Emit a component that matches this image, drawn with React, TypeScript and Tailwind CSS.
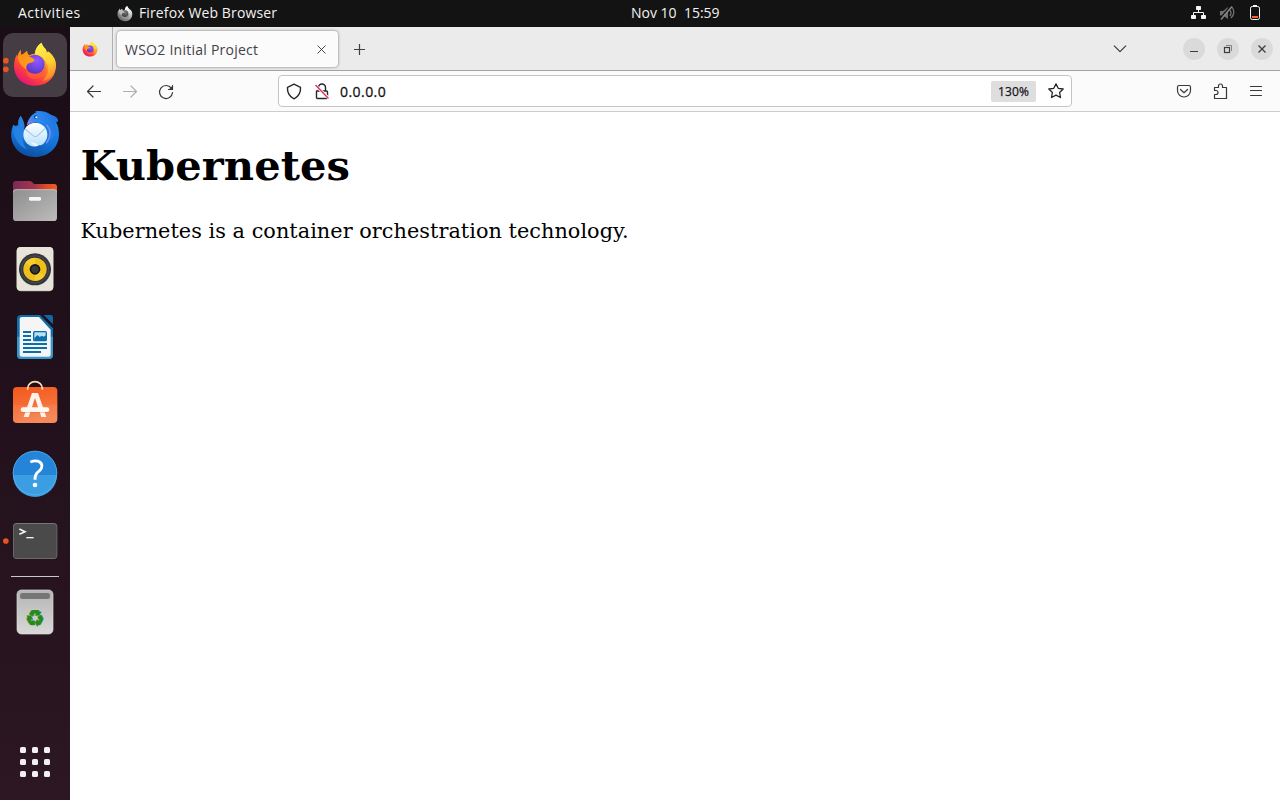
import type { ReactNode } from "react";

function FirefoxArt({ id, mono = false }: { id: string; mono?: boolean }) {
  const body = `${id}-body`;
  const flame = `${id}-flame`;
  const globe = `${id}-globe`;
  const face = `${id}-face`;
  return (
    <g>
      <defs>
        <linearGradient id={body} x1="0.85" y1="0.1" x2="0.25" y2="1">
          <stop offset="0" stopColor={mono ? "#e8e8e8" : "#ffe23a"} />
          <stop offset="0.35" stopColor={mono ? "#b8b8b8" : "#ff9a2a"} />
          <stop offset="0.7" stopColor={mono ? "#8a8a8a" : "#ff4239"} />
          <stop offset="1" stopColor={mono ? "#666" : "#e3107b"} />
        </linearGradient>
        <linearGradient id={flame} x1="0.4" y1="0" x2="0.7" y2="1">
          <stop offset="0" stopColor={mono ? "#fff" : "#fff04a"} />
          <stop offset="0.55" stopColor={mono ? "#ddd" : "#ffd030"} />
          <stop offset="1" stopColor={mono ? "#999" : "#ff7a2e"} />
        </linearGradient>
        <radialGradient id={globe} cx="0.6" cy="0.3" r="0.75">
          <stop offset="0" stopColor={mono ? "#777" : "#9059ff"} />
          <stop offset="0.55" stopColor={mono ? "#555" : "#7046e4"} />
          <stop offset="1" stopColor={mono ? "#444" : "#5b30b8"} />
        </radialGradient>
        <linearGradient id={face} x1="0" y1="0" x2="1" y2="1">
          <stop offset="0" stopColor={mono ? "#c8c8c8" : "#ff8a16"} />
          <stop offset="1" stopColor={mono ? "#aaa" : "#ffa21f"} />
        </linearGradient>
      </defs>
      <path d="M63 65C61 73 63 78 65 81C69 77 76 74 81 68C81 75 84 79 88 82C96 76 104 78 104 78C107 61 113 52 125 44C127 53 131 57 136 62C139 66 140 70 140 75L144 70C155 77 168 93 168 111C168 149 141 173 105 173C69 173 42 148 42 113C42 99 47 86 51 79L52 87C53 78 58 70 63 65Z" fill={`url(#${body})`} />
      <path d="M104 79C107 61 113 52 125 44C127 53 131 57 136 62C139 66 140 70 140 75L144 71C158 80 168 96 167 113C166 139 150 154 127 159C143 146 147 130 143 115C139 98 125 83 104 79Z" fill={`url(#${flame})`} />
      <circle cx="105" cy="109" r="29" fill={`url(#${globe})`} />
      <path d="M63 65C61 73 63 78 65 81C70 77 76 74 81 68C81 75 84 81 89 87C96 88 100 91 104 96C103 102 94 104 86 106C79 110 78 119 79 125C70 118 58 107 56 98C51 88 55 74 63 65Z" fill={`url(#${face})`} />
      <path d="M78 121C83 133 94 138 105 138C121 138 133 127 134 111C143 128 130 151 108 153C89 154 75 140 78 121Z" fill={mono ? "#999" : "#ff5b39"} opacity="0.8" />
    </g>
  );
}

function DockItem({ viewBox, children }: { viewBox: string; children: ReactNode }) {
  return (
    <svg className="block h-[68px] w-[70px] shrink-0" viewBox={viewBox}>
      {children}
    </svg>
  );
}

function Dock() {
  return (
    <nav className="flex w-[70px] shrink-0 flex-col items-center bg-linear-to-b from-[#1a0d16] via-[#22111c] to-[#2c1722] pt-1 pb-[4px]">
      <DockItem viewBox="0 9 210 204">
        <rect x="9" y="15" width="192" height="192" rx="30" fill="#463c44" />
        <circle cx="17.500" cy="98" r="8.500" fill="#e95420" />
        <circle cx="17.500" cy="124" r="8.500" fill="#e95420" />
        <FirefoxArt id="dock-fox" />
      </DockItem>

      <DockItem viewBox="0 213 210 204">
        <defs>
          <linearGradient id="tb-body" x1="0.7" y1="0" x2="0.4" y2="1">
            <stop offset="0" stopColor="#1b8cf0" />
            <stop offset="0.6" stopColor="#1373d9" />
            <stop offset="1" stopColor="#0c4fa0" />
          </linearGradient>
          <linearGradient id="tb-head" x1="0" y1="0.6" x2="1" y2="0.3">
            <stop offset="0" stopColor="#9a80f0" />
            <stop offset="0.3" stopColor="#2f8df4" />
            <stop offset="1" stopColor="#1d72dc" />
          </linearGradient>
          <linearGradient id="tb-mail" x1="0" y1="0" x2="0" y2="1">
            <stop offset="0" stopColor="#ffffff" />
            <stop offset="1" stopColor="#b9e0fb" />
          </linearGradient>
        </defs>
        <path d="M62 263C56 272 54 281 56 290C50 292 45 296 40 290C32 307 31 330 40 349C51 373 74 387 105 387C146 387 177 359 177 318C177 303 173 292 168 282L174 279C168 269 158 262 148 258L108 285L72 310C66 300 74 288 62 263Z" fill="url(#tb-body)" />
        <path d="M40 290C37 320 50 352 82 365C60 343 72 318 74 294C72 280 67 270 62 263C54 273 53 286 57 297C48 300 43 296 40 290Z" fill="#2582e3" />
        <path d="M80 292C86 270 95 258 111 252L104 250C124 247 143 252 153 261C169 264 174 271 174 279C171 282 166 284 163 285C173 302 169 325 151 339C157 320 148 300 137 290C120 278 99 282 80 292Z" fill="url(#tb-head)" />
        <circle cx="106" cy="320" r="36" fill="url(#tb-mail)" />
        <path d="M75 303L99 323Q106 329 113 323L136 301" fill="none" stroke="#9ccdf1" strokeWidth="3.500" />
        <path d="M92 343Q111 343 122 360Q102 358 92 343Z" fill="#eaf7ff" />
        <path d="M78 353Q97 377 130 357L120 351Q98 362 78 353Z" fill="#1761bb" />
        <path d="M139 290C156 308 151 329 139 346" fill="none" stroke="#7c90e8" strokeWidth="4" />
        <circle cx="107" cy="267" r="5" fill="#0b3e86" />
        <circle cx="109" cy="268" r="3" fill="#fff" />
      </DockItem>

      <DockItem viewBox="0 -3 210 204">
        <defs>
          <linearGradient id="files-back" x1="0" y1="0" x2="1" y2="0">
            <stop offset="0" stopColor="#7c2a58" />
            <stop offset="0.5" stopColor="#a5364a" />
            <stop offset="0.75" stopColor="#e04a22" />
            <stop offset="1" stopColor="#f05d22" />
          </linearGradient>
          <linearGradient id="files-front" x1="0" y1="0" x2="1" y2="1">
            <stop offset="0" stopColor="#8e8e8e" />
            <stop offset="1" stopColor="#bcbcbc" />
          </linearGradient>
        </defs>
        <path d="M39 48Q39 39 48 39H88Q93 39 97 43L102 48H163Q171 48 171 57V100H39Z" fill="url(#files-back)" />
        <rect x="39" y="64" width="132" height="95" rx="10" fill="url(#files-front)" />
        <path d="M40 73Q40 65 48 65H162Q170 65 170 73" fill="none" stroke="#d0d0d0" strokeWidth="2" />
        <rect x="87" y="87" width="36" height="11" rx="4" fill="#f7f7f7" />
      </DockItem>

      <DockItem viewBox="0 201 210 204">
        <rect x="50" y="237" width="110" height="133" rx="13" fill="#aaa69c" />
        <rect x="50" y="237" width="110" height="131" rx="12" fill="#e8e4da" />
        <circle cx="105" cy="304" r="48" fill="#353638" />
        <circle cx="105" cy="304" r="41" fill="none" stroke="#4a4c5e" strokeWidth="3" />
        <circle cx="105" cy="304" r="35" fill="#efc01c" />
        <path d="M105 304L76 284A35 35 0 0 1 105 269ZM105 304L134 324A35 35 0 0 1 105 339Z" fill="#ffd93f" opacity="0.500" />
        <circle cx="105" cy="304" r="16" fill="#151617" />
        <circle cx="105" cy="304" r="11" fill="#37383a" />
      </DockItem>

      <DockItem viewBox="0 -3 210 204">
        <path d="M63 33H120L159 73V152Q159 165 147 165H63Q51 165 51 152V45Q51 33 63 33Z" fill="#0f6ea9" />
        <path d="M51 98H159V152Q159 165 147 165H63Q51 165 51 152Z" fill="#3597c7" />
        <path d="M66 39H117L152 77V152Q152 158 146 158H66Q59 158 59 152V46Q59 39 66 39Z" fill="#f5f5f5" />
        <path d="M131 33H152Q159 33 159 40V61Z" fill="#0c69a5" />
        <g stroke="#0a6eab" strokeWidth="5.500">
          <path d="M69 84H93M69 96H93M69 108H93M69 120H141M69 132H141M69 144H123" />
        </g>
        <rect x="101" y="83" width="38" height="27" rx="3" fill="#badff0" stroke="#0a6eab" strokeWidth="4" />
        <path d="M103 103L112 93L119 99L126 95L131 98L138 94V109H103Z" fill="#0a6eab" />
      </DockItem>

      <DockItem viewBox="0 201 210 204">
        <defs>
          <linearGradient id="store" x1="0" y1="0" x2="0.3" y2="1">
            <stop offset="0" stopColor="#f35819" />
            <stop offset="0.5" stopColor="#f56a32" />
            <stop offset="1" stopColor="#f6824f" />
          </linearGradient>
        </defs>
        <rect x="39" y="249" width="133" height="108" rx="12" fill="url(#store)" />
        <path d="M39 303H172V346Q170 357 160 357H50Q39 356 39 346Z" fill="#fff" opacity="0.060" />
        <path d="M83 257V253A22 20 0 0 1 127 253V257" fill="none" stroke="#f9deb5" strokeWidth="5" />
        <path d="M71 339L96 267H114L139 339H124L105 282L86 339Z" fill="#fcf3ea" />
        <rect x="62" y="310" width="86" height="14" rx="7" fill="#fff8f1" />
        <path d="M63 325.500H147" stroke="#dd5b2d" strokeWidth="2.500" opacity="0.350" />
      </DockItem>

      <DockItem viewBox="0 15 210 204">
        <circle cx="105" cy="117" r="66.500" fill="#2384d8" />
        <path d="M39 123H171A66 66 0 0 1 39 123Z" fill="#3b9ee3" />
        <circle cx="105" cy="117" r="65.500" fill="none" stroke="#60b3ee" strokeWidth="2" />
        <path d="M91 84Q108 77 119 84Q129 91 124 103Q121 109 112 116Q105 122 105 137" fill="none" stroke="#fff" strokeWidth="8.500" />
        <circle cx="105" cy="153" r="7" fill="#fff" />
      </DockItem>

      <DockItem viewBox="0 219 210 204">
        <circle cx="17.500" cy="321" r="8.500" fill="#e95420" />
        <rect x="39" y="267" width="133" height="108" rx="12" fill="#777" />
        <rect x="41" y="270" width="129" height="103" rx="10" fill="#4a4a4a" />
        <path d="M58 285L75 293L58 301" fill="none" stroke="#f3f3f3" strokeWidth="5" />
        <path d="M79 311H101" stroke="#f3f3f3" strokeWidth="4" />
      </DockItem>

      <div className="mt-px h-px w-12 shrink-0 bg-[#c9c5c8]" />
      <div className="h-px shrink-0" />

      <DockItem viewBox="0 24 210 204">
        <defs>
          <linearGradient id="trash" x1="0" y1="0" x2="0" y2="1">
            <stop offset="0" stopColor="#b5b5b5" />
            <stop offset="1" stopColor="#d8d8d8" />
          </linearGradient>
        </defs>
        <rect x="51" y="60" width="108" height="132" rx="13" fill="url(#trash)" stroke="#dedede" strokeWidth="2" />
        <rect x="60" y="69" width="90" height="18" rx="7" fill="#767676" />
        <text x="105" y="167" textAnchor="middle" fontFamily="DejaVu Sans, sans-serif" fontSize="66" fill="#26891e" stroke="#26891e" strokeWidth="2.500">♻</text>
      </DockItem>

      <div className="mt-auto mb-[19px] grid grid-cols-3 gap-1.5">
        {[0, 1, 2, 3, 4, 5, 6, 7, 8].map((n) => (
          <span key={n} className="size-1.5 rounded-[1.500px] bg-[#f2f0f1]" />
        ))}
      </div>
    </nav>
  );
}

function TopBar() {
  return (
    <header className="flex h-[27px] shrink-0 items-center bg-[#131313] font-['Open_Sans','Noto_Sans',sans-serif] text-[14px] leading-[25px] whitespace-pre text-[#f2f2f2]">
      <span className="w-[99px] pb-0.5 pl-[18px] tracking-[0.5px]">Activities</span>
      <svg className="ml-[18px] h-4 w-[22px]" viewBox="38 44 132 136" preserveAspectRatio="xMinYMid meet">
        <FirefoxArt id="bar-fox" mono />
      </svg>
      <span className="w-[492px] pb-0.5 tracking-[0.120px]">Firefox Web Browser</span>
      <span className="pb-0.5">Nov 10  15:59</span>
      <svg className="mr-[18px] ml-auto h-[27px] w-[72px]" viewBox="1190 0 72 27">
        <g fill="#f5f5f5">
          <rect x="1196" y="6" width="5" height="4" rx="0.800" />
          <rect x="1191" y="15" width="5" height="4" rx="0.800" />
          <rect x="1201" y="15" width="5" height="4" rx="0.800" />
        </g>
        <path d="M1198.500 9V12.500M1193.500 15.500V12.500H1203.500V15.500" fill="none" stroke="#f5f5f5" />
        <path d="M1220 11H1223L1228 7V19L1223 15.500H1220Z" fill="#6f6f6f" />
        <path d="M1230 10Q1232 13 1230 16M1232 7Q1236 13 1231 18" fill="none" stroke="#6f6f6f" strokeWidth="1.300" />
        <path d="M1220 18.500L1231 5.500" stroke="#131313" strokeWidth="1.200" />
        <path d="M1221 19.500L1232 6.500" stroke="#858585" strokeWidth="1.500" />
        <rect x="1250.500" y="6.500" width="9" height="13" rx="1.800" fill="none" stroke="#f5f5f5" />
        <rect x="1253" y="5" width="4" height="2" fill="#f5f5f5" />
        <rect x="1252" y="16" width="6" height="2" fill="#f26a2e" />
      </svg>
    </header>
  );
}

function WindowButton({ children }: { children: ReactNode }) {
  return (
    <button className="flex size-[22px] items-center justify-center rounded-full bg-[#dadada]">
      <svg className="size-[22px]" viewBox="0 0 22 22" fill="none" stroke="#3d3d3d">
        {children}
      </svg>
    </button>
  );
}

function TabStrip() {
  return (
    <div className="flex h-11 shrink-0 border-b border-[#a3a3a3] bg-[#ebebeb]">
      <div className="flex w-[43px] items-center border-r border-[#b0b0b0] pl-3">
        <svg className="size-4" viewBox="38 41 134 136">
          <FirefoxArt id="tab-fox" />
        </svg>
      </div>
      <div className="mt-[4px] ml-1 flex h-[36px] w-[221px] items-center rounded bg-[#fbfbfb] shadow-[0_0_3px_rgba(0,0,0,0.5)]">
        <span className="pl-[8px] font-['Open_Sans','Noto_Sans',sans-serif] text-[14px] tracking-[0.250px] text-[#42414a]">WSO2 Initial Project</span>
        <svg className="mr-[12px] ml-auto size-[9px]" viewBox="0 0 9 9" stroke="#48474f" strokeWidth="1">
          <path d="M0.500 0.500L8.500 8.500M8.500 0.500L0.500 8.500" />
        </svg>
      </div>
      <svg className="mt-[16px] ml-[16px] h-[13px] w-[11px]" viewBox="0 0 11 13" stroke="#3f3f44" strokeWidth="1.200">
        <path d="M5.500 1V12M0 6.500H11" />
      </svg>
      <svg className="mt-[18px] mr-[56px] ml-auto h-2 w-[14px]" viewBox="0 0 14 8" fill="none" stroke="#3f3f44" strokeWidth="1.200">
        <path d="M1 0.700L7 6.700L13 0.700" />
      </svg>
      <div className="mt-[11px] mr-[7px] flex h-[22px] gap-3">
        <WindowButton>
          <path d="M7 13.500H15" />
        </WindowButton>
        <WindowButton>
          <rect x="7.500" y="9.500" width="5" height="5" strokeWidth="1.200" />
          <path d="M9 7.500H14.500V13" stroke="#858585" />
        </WindowButton>
        <WindowButton>
          <path d="M7.500 7.500L14.500 14.500M14.500 7.500L7.500 14.500" strokeWidth="1.300" />
        </WindowButton>
      </div>
    </div>
  );
}

function NavBar() {
  return (
    <div className="flex h-[41px] shrink-0 border-b border-[#cccccc] bg-[#fbfbfb]">
      <svg className="h-10 w-[208px] shrink-0" viewBox="70 71 208 40" fill="none" stroke="#38373d" strokeWidth="1.200" strokeLinecap="round" strokeLinejoin="round">
        <path d="M87.500 91.500H100.500M93 86L87.500 91.500L93 97" />
        <path d="M136.500 91.500H123.500M131 86L136.500 91.500L131 97" stroke="#aeaeb0" />
        <path d="M171.300 88.200A6.500 6.500 0 1 0 172.500 92.500M172.500 85.500V89.500H168.500" />
        <path d="M172.800 85.500V90H168.300Z" fill="#38373d" stroke="none" />
      </svg>
      <div className="mt-1 flex h-8 w-[794px] shrink-0 items-center rounded border border-[#c5c5c6] bg-white">
        <svg className="h-[30px] w-[61px] shrink-0" viewBox="279 76 61 30" fill="none" stroke="#26252b" strokeWidth="1.400" strokeLinejoin="round">
          <path d="M294 84.200L300.500 87.300C301 92 298.500 96.800 294 98.800C289.500 96.800 287 92 287.500 87.300Z" />
          <path d="M318.500 90.500V87.500A3.500 3.500 0 0 1 325.500 87.500V90.500M316.500 91H326.500Q327.500 91 327.500 92V97.500Q327.500 98.500 326.500 98.500H317.500Q316.500 98.500 316.500 97.500Z" />
          <path d="M314.500 84.500L329 98.500" stroke="#fff" strokeWidth="3" />
          <path d="M315.500 85L328.500 98.500" stroke="#e22850" strokeWidth="1.300" />
        </svg>
        <span className="pt-px font-['Open_Sans','Noto_Sans',sans-serif] text-[14px] tracking-[0.450px] text-[#15141a] [-webkit-text-stroke:0.300px_#15141a]">0.0.0.0</span>
        <span className="ml-auto flex h-[21px] w-[45px] items-center justify-center rounded-[2px] bg-[#dedede] pt-px font-['Open_Sans','Noto_Sans',sans-serif] text-[12px] tracking-[0.100px] text-[#15141a] [-webkit-text-stroke:0.250px_#15141a]">130%</span>
        <svg className="mr-[7px] ml-[12px] size-4" viewBox="0 0 16 16" fill="none" stroke="#26252b" strokeWidth="1.300" strokeLinejoin="round">
          <path d="M8 0.900L10.200 5.300L15.200 6L11.600 9.500L12.500 14.500L8 12.200L3.500 14.500L4.400 9.500L0.800 6L5.800 5.300Z" />
        </svg>
      </div>
      <svg className="ml-auto h-10 w-[110px] shrink-0" viewBox="1170 71 110 40" fill="none" stroke="#38373d" strokeWidth="1.200" strokeLinecap="round" strokeLinejoin="round">
        <path d="M1179 85.500H1189Q1190.500 85.500 1190.500 87V90.500A6.500 6.500 0 0 1 1177.500 90.500V87Q1177.500 85.500 1179 85.500ZM1180.500 89.500L1184 92.700L1187.500 89.500" />
        <path d="M1214.500 87.500H1218.500V86A2 2 0 0 1 1222.500 86V87.500H1226.500V98.500H1214.500V94.500H1216A1.800 1.800 0 0 0 1216 90.500H1214.500Z" />
        <path d="M1250.500 86.500H1261.500M1250.500 90.500H1261.500M1250.500 95.500H1261.500" strokeWidth="1.100" />
      </svg>
    </div>
  );
}

export default function App() {
  return (
    <div className="flex h-[800px] w-[1280px] flex-col overflow-hidden bg-white">
      <TopBar />
      <div className="flex min-h-0 flex-1">
        <Dock />
        <section className="flex min-w-0 flex-1 flex-col">
          <TabStrip />
          <NavBar />
          <main className="flex-1 bg-white px-[10.400px] font-['DejaVu_Serif',serif] text-black">
            <h1 className="mt-[29px] text-[41.600px] leading-[49px] font-bold tracking-[0.100px]">Kubernetes</h1>
            <p className="mt-[29px] text-[20.800px] leading-[25px] tracking-[0.040px]">Kubernetes is a container orchestration technology.</p>
          </main>
        </section>
      </div>
    </div>
  );
}
